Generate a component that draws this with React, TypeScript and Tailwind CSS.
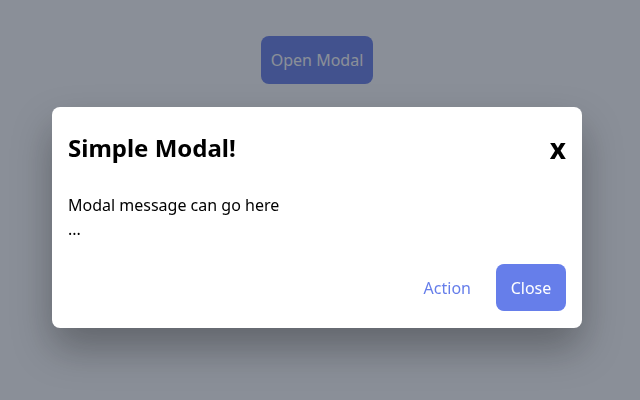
export default function App() {
  return (
    <div className="relative h-[400px] w-[640px] bg-white font-['Noto_Sans',sans-serif]">
      <div className="flex justify-center pt-9 pr-[6px]">
        <button className="h-12 w-[112px] rounded-lg bg-[#667eea] text-base text-white">
          Open Modal
        </button>
      </div>

      <div className="fixed inset-0 flex items-start justify-center bg-[rgba(34,43,60,0.53)] pt-[107px] pr-[6px]">
        <div className="flex w-[530px] flex-col rounded-lg bg-white px-4 pt-4 pb-[17px] shadow-[0_20px_40px_rgba(0,0,0,0.3)]">
          <div className="flex h-[50px] items-center justify-between">
            <h2 className="text-2xl font-bold text-black">Simple Modal!</h2>
            <button className="text-[28px] font-bold leading-none text-black">x</button>
          </div>
          <div className="mt-5 text-base leading-6 text-black">
            <p>Modal message can go here</p>
            <p>...</p>
          </div>
          <div className="mt-[23px] flex items-center justify-end gap-[25px]">
            <button className="text-base text-[#667eea]">Action</button>
            <button className="h-[47px] w-[70px] rounded-lg bg-[#667eea] text-base text-white">
              Close
            </button>
          </div>
        </div>
      </div>
    </div>
  );
}
